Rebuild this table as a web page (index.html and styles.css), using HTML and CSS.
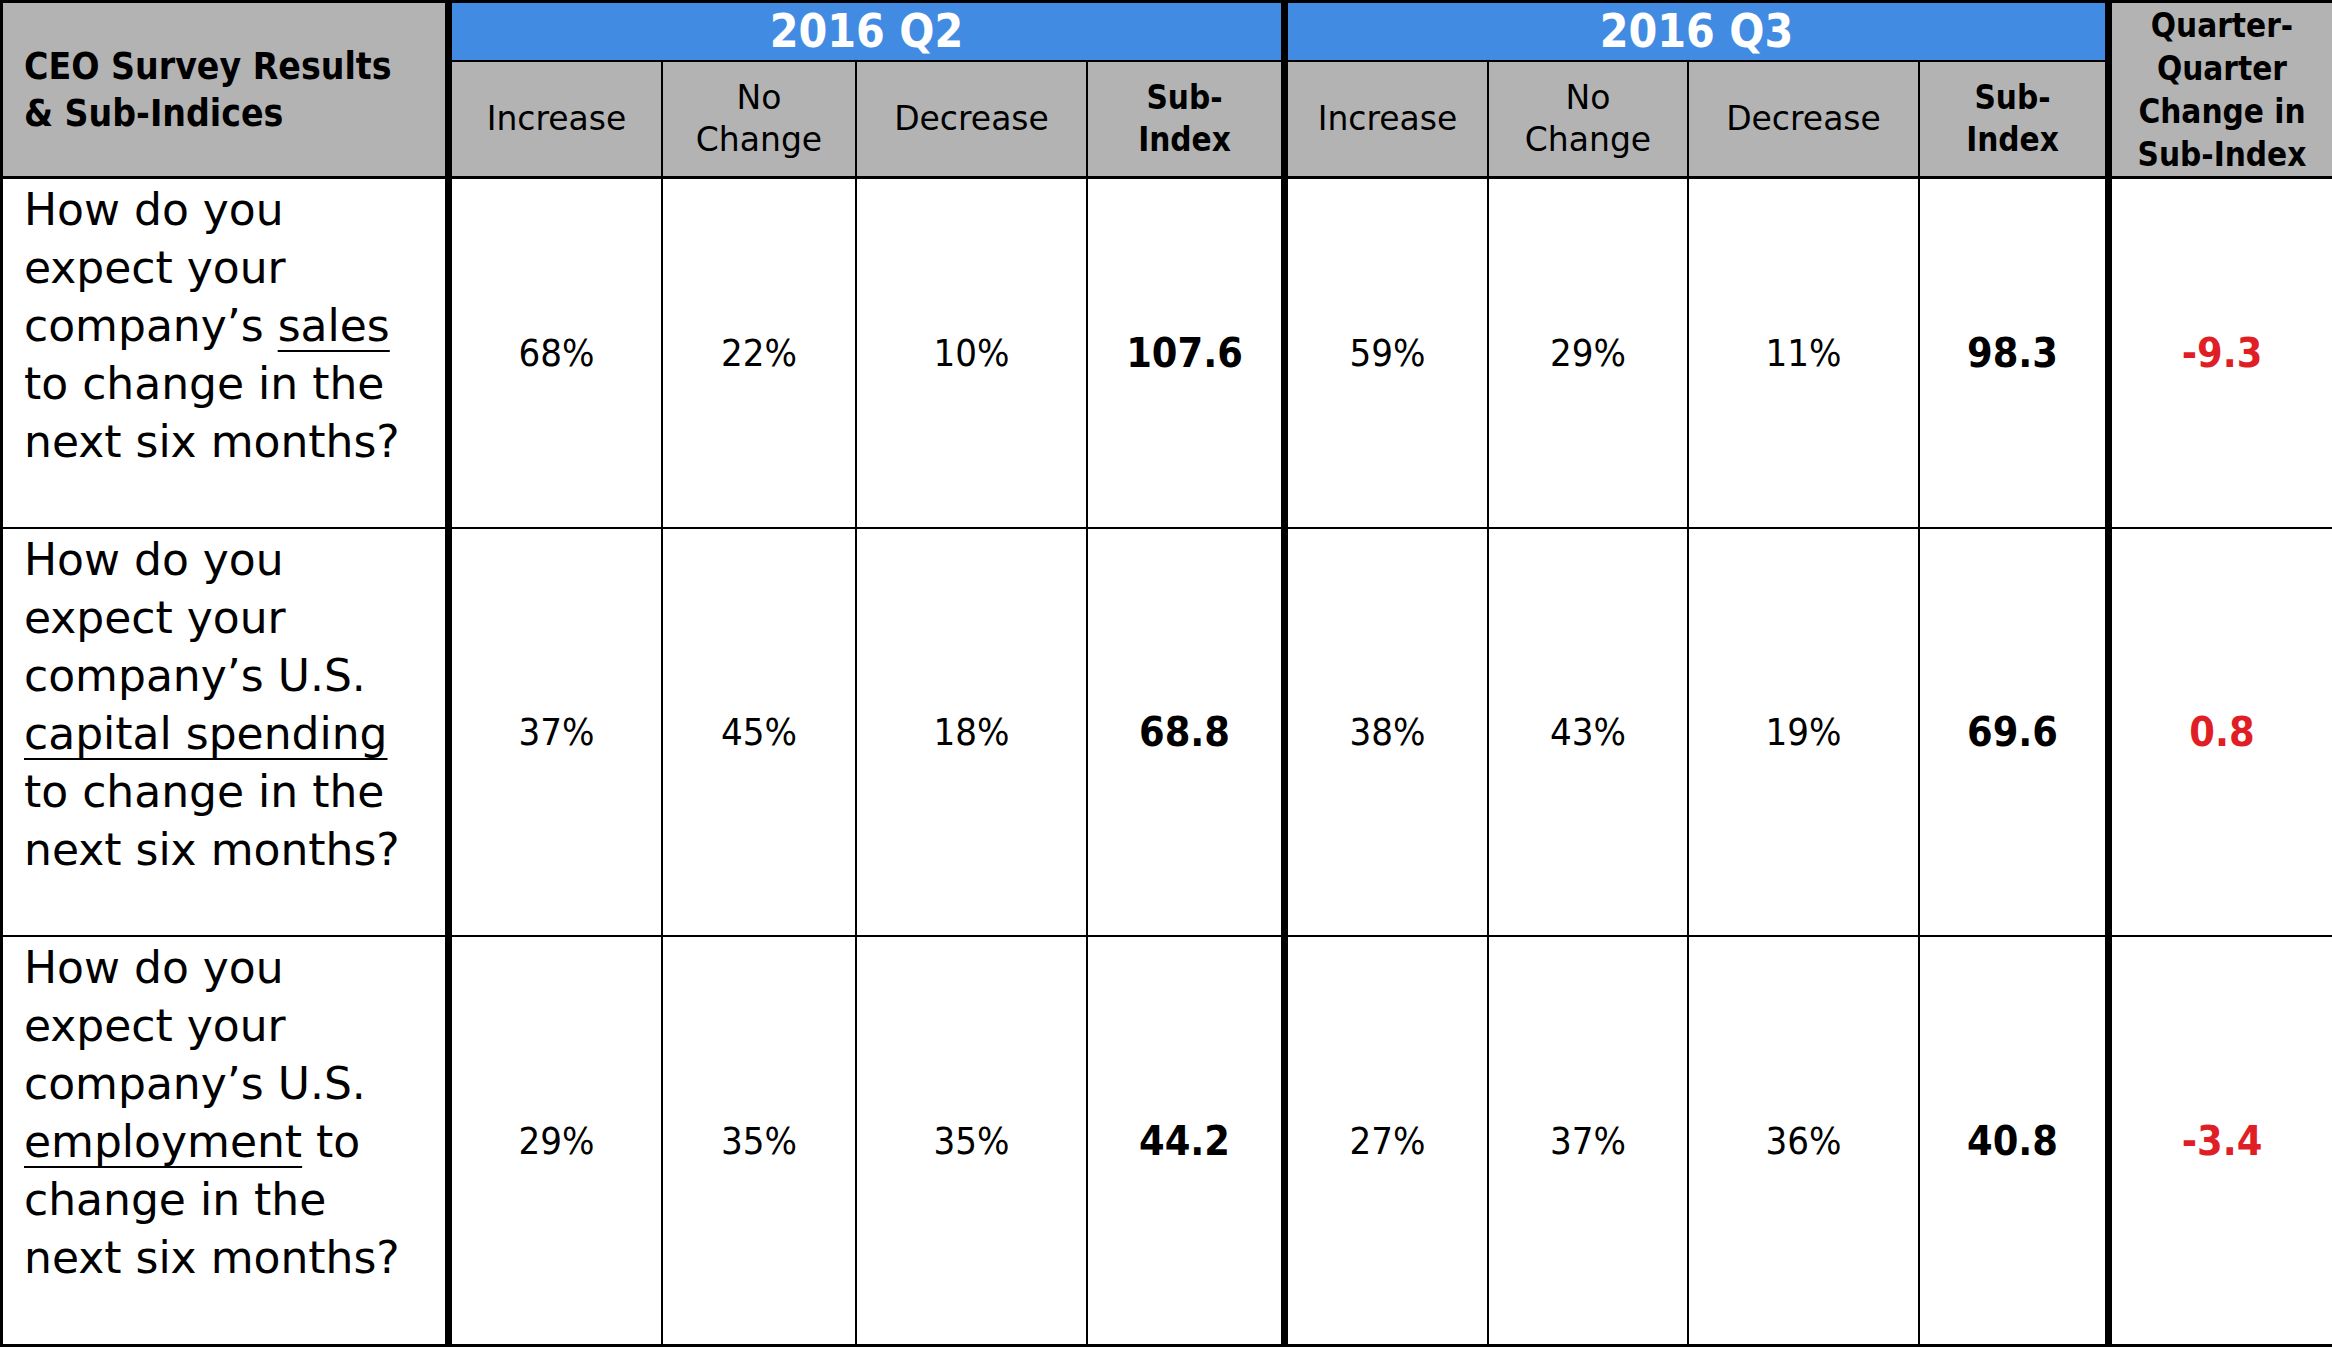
FILE: index.html
```html
<!DOCTYPE html>
<html lang="en">
<head>
<meta charset="utf-8">
<title>CEO Survey Results &amp; Sub-Indices</title>
<link rel="stylesheet" href="styles.css">
</head>
<body>
<div class="survey">
  <div class="cell corner hb"><span>CEO Survey Results<br>&amp; Sub-Indices</span></div>
  <div class="cell quarter thick">2016 Q2</div>
  <div class="cell quarter thick">2016 Q3</div>
  <div class="cell qq hb last"><span>Quarter-<br>Quarter<br>Change in<br>Sub-Index</span></div>

  <div class="cell sub hb">Increase</div>
  <div class="cell sub hb"><span>No<br>Change</span></div>
  <div class="cell sub hb">Decrease</div>
  <div class="cell sub hb strong thick"><span>Sub-<br>Index</span></div>
  <div class="cell sub hb">Increase</div>
  <div class="cell sub hb"><span>No<br>Change</span></div>
  <div class="cell sub hb">Decrease</div>
  <div class="cell sub hb strong thick"><span>Sub-<br>Index</span></div>

  <div class="cell question thick"><p class="qtext">How do you<br>expect your<br>company’s <u>sales</u><br>to change in the<br>next six months?</p></div>
  <div class="cell val">68%</div>
  <div class="cell val">22%</div>
  <div class="cell val">10%</div>
  <div class="cell val idx thick">107.6</div>
  <div class="cell val">59%</div>
  <div class="cell val">29%</div>
  <div class="cell val">11%</div>
  <div class="cell val idx thick">98.3</div>
  <div class="cell val chg last">-9.3</div>

  <div class="cell question thick"><p class="qtext">How do you<br>expect your<br>company’s U.S.<br><u>capital spending</u><br>to change in the<br>next six months?</p></div>
  <div class="cell val">37%</div>
  <div class="cell val">45%</div>
  <div class="cell val">18%</div>
  <div class="cell val idx thick">68.8</div>
  <div class="cell val">38%</div>
  <div class="cell val">43%</div>
  <div class="cell val">19%</div>
  <div class="cell val idx thick">69.6</div>
  <div class="cell val chg last">0.8</div>

  <div class="cell question thick hb"><p class="qtext">How do you<br>expect your<br>company’s U.S.<br><u>employment</u> to<br>change in the<br>next six months?</p></div>
  <div class="cell val hb">29%</div>
  <div class="cell val hb">35%</div>
  <div class="cell val hb">35%</div>
  <div class="cell val idx thick hb">44.2</div>
  <div class="cell val hb">27%</div>
  <div class="cell val hb">37%</div>
  <div class="cell val hb">36%</div>
  <div class="cell val idx thick hb">40.8</div>
  <div class="cell val chg last hb">-3.4</div>
</div>
</body>
</html>
```

FILE: styles.css
```css
html, body {
  margin: 0;
  padding: 0;
  background: #ffffff;
}

body {
  width: 2332px;
  height: 1356px;
  overflow: hidden;
  font-family: "DejaVu Sans", "Liberation Sans", sans-serif;
  color: #000000;
}

.survey {
  display: grid;
  grid-template-columns: 449px 211px 194px 231px 200px 201px 200px 231px 192px 220px;
  grid-template-rows: 59px 117px 350px 408px 410px;
  border-left: 3px solid #000000;
  border-top: 3px solid #000000;
  width: 2329px;
}

.cell {
  box-sizing: border-box;
  border-right: 2px solid #000000;
  border-bottom: 2px solid #000000;
  background: #ffffff;
  display: flex;
  align-items: center;
  justify-content: center;
  text-align: center;
  white-space: nowrap;
}

.cell.thick {
  border-right-width: 7px;
}

.cell.last {
  border-right: none;
}

.cell.hb {
  border-bottom-width: 3px;
}

.corner {
  grid-row: span 2;
  background: #b3b3b3;
  border-right-width: 7px;
  justify-content: flex-start;
  text-align: left;
  padding-left: 21px;
  font-family: "DejaVu Sans Condensed", "DejaVu Sans", sans-serif;
  font-weight: bold;
  font-size: 37px;
  line-height: 47px;
}

.quarter {
  grid-column: span 4;
  background: #428be2;
  color: #ffffff;
  font-family: "DejaVu Sans Condensed", "DejaVu Sans", sans-serif;
  font-weight: bold;
  font-size: 46px;
  line-height: 57px;
}

.qq {
  grid-row: span 2;
  background: #b3b3b3;
  font-family: "DejaVu Sans Condensed", "DejaVu Sans", sans-serif;
  font-weight: bold;
  font-size: 33px;
  line-height: 43px;
}

.sub {
  background: #b3b3b3;
  font-size: 33px;
  line-height: 42px;
}

.sub.strong {
  font-family: "DejaVu Sans Condensed", "DejaVu Sans", sans-serif;
  font-weight: bold;
}

.question {
  align-items: flex-start;
  justify-content: flex-start;
  text-align: left;
  padding: 2px 0 0 21px;
}

.qtext {
  margin: 0;
  font-size: 44px;
  line-height: 58px;
}

.qtext u {
  text-decoration-thickness: 2px;
  text-underline-offset: 9px;
}

.val {
  font-family: "DejaVu Sans Condensed", "DejaVu Sans", sans-serif;
  font-size: 38px;
}

.val.idx,
.val.chg {
  font-weight: bold;
  font-size: 41px;
}

.val.chg {
  color: #e01e25;
}
```
